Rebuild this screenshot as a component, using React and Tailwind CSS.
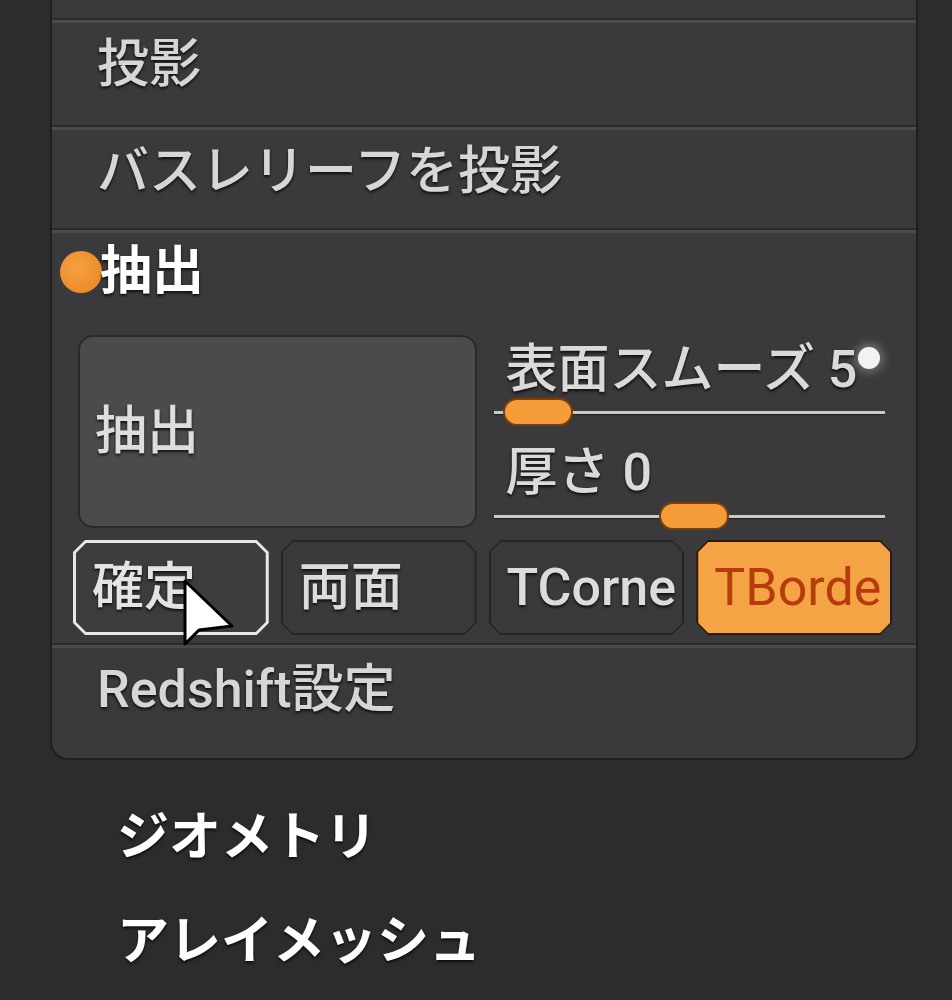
import React from "react";

const FONT = "font-['Roboto','Noto_Sans_CJK_JP',sans-serif]";
const SHADOW = "[text-shadow:0_2px_3px_rgba(0,0,0,0.75)]";

function Sep() {
  return <div className="h-[5px] border-t-2 border-[#2b2b2d] bg-[#4b4b4d]" />;
}

const CLIP_OUT =
  "[clip-path:polygon(12px_0,calc(100%_-_12px)_0,100%_12px,100%_calc(100%_-_12px),calc(100%_-_12px)_100%,12px_100%,0_calc(100%_-_12px),0_12px)]";
const CLIP_IN =
  "[clip-path:polygon(10px_0,calc(100%_-_10px)_0,100%_10px,100%_calc(100%_-_10px),calc(100%_-_10px)_100%,10px_100%,0_calc(100%_-_10px),0_10px)]";

function Btn({ children, variant }) {
  let outer = "bg-[#252527] p-[2px]";
  let inner = "bg-[#3a3a3c] text-[#dcdcdc]";
  if (variant === "sel") {
    outer = "bg-[#e8e8e8] p-[3px]";
    inner = "bg-[#3d3d3f] text-[#e4e4e4]";
  } else if (variant === "on") {
    outer = "bg-[#2a1a0c] p-[2px]";
    inner = "bg-[#f4a444] text-[#b63c0e]";
  }
  return (
    <div className={`h-[95px] ${outer} ${CLIP_OUT}`}>
      <div
        className={`h-full w-full flex items-center pl-[16px] overflow-hidden whitespace-nowrap ${inner} ${CLIP_IN}`}
      >
        <span className={`text-[52px] leading-none ${variant === "on" ? "font-normal" : `font-medium ${SHADOW}`}`}>{children}</span>
      </div>
    </div>
  );
}

function Slider({ offset }) {
  return (
    <div className="relative h-[28px] flex items-center">
      <div className="w-full h-[3px] bg-[#cacaca] shadow-[0_1px_1px_rgba(0,0,0,0.5)]" />
      <div
        className="absolute top-0 h-[28px] w-[70px] rounded-full bg-[#f39c38] border-2 border-[#7a3f0e]"
        style={{ left: offset }}
      />
    </div>
  );
}

export default function App() {
  return (
    <div className={`relative h-[1000px] w-[952px] overflow-hidden bg-[#2c2c2e] ${FONT}`}>
      <div className="ml-[50px] w-[868px] bg-[#3a3a3c] border-x-2 border-b-2 border-[#1f1f21] rounded-b-[18px]">
        <div className="h-[18px]" />
        <Sep />
        <div className="h-[102px] flex items-center pl-[45px] pb-[18px]">
          <span className={`text-[52px] leading-none font-medium text-[#d6d6d6] ${SHADOW}`}>投影</span>
        </div>
        <Sep />
        <div className="h-[98px] flex items-center pl-[45px] pb-[14px]">
          <span className={`text-[52px] leading-none font-medium text-[#d6d6d6] ${SHADOW}`}>バスレリーフを投影</span>
        </div>
        <Sep />
        <div className="h-[78px] flex items-center">
          <div className="ml-[8px] h-[42px] w-[42px] shrink-0 rounded-full bg-[radial-gradient(circle_at_40%_40%,#f7a040,#e5851f)]" />
          <span className={`-ml-[2px] text-[52px] leading-none font-bold text-white ${SHADOW}`}>抽出</span>
        </div>
        <div className="mt-[24px] pl-[21px] pr-[24px]">
          <div className="grid grid-cols-2 gap-3">
            <div className="ml-[5px] h-[193px] rounded-[15px] border-2 border-[#2a2a2c] bg-[#4b4b4c] flex items-center pl-[15px]">
              <span className={`text-[52px] leading-none font-medium text-[#dedede] ${SHADOW}`}>抽出</span>
            </div>
            <div className="pl-[5px] pr-[7px] flex flex-col">
              <div className="relative mt-[10px] h-[50px] flex items-center pl-[12px]">
                <span className={`text-[52px] leading-none font-medium text-[#dadada] whitespace-nowrap ${SHADOW}`}>表面スムーズ 5</span>
                <div className="absolute left-[364px] top-[2px] h-[22px] w-[22px] rounded-full bg-[#f2f2f2] shadow-[0_0_8px_4px_rgba(200,200,200,0.35)]" />
              </div>
              <div className="mt-[3px]">
                <Slider offset={9} />
              </div>
              <div className="mt-[22px] h-[50px] flex items-center pl-[12px]">
                <span className={`text-[52px] leading-none font-medium text-[#dadada] whitespace-nowrap ${SHADOW}`}>厚さ 0</span>
              </div>
              <div className="mt-[4px]">
                <Slider offset={165} />
              </div>
            </div>
          </div>
          <div className="relative mt-[10px] grid grid-cols-4 gap-3">
            <Btn variant="sel">確定</Btn>
            <Btn>両面</Btn>
            <Btn>TCorne</Btn>
            <Btn variant="on">TBorde</Btn>
            <svg
              className="absolute left-[109px] top-[38px]"
              width="54"
              height="72"
              viewBox="0 0 54 72"
            >
              <path
                d="M3 3 L3 66 L17 52 L50 48 Z"
                fill="#ffffff"
                stroke="#000000"
                strokeWidth="3"
                strokeLinejoin="round"
              />
            </svg>
          </div>
          <div className="h-[8px]" />
        </div>
        <Sep />
        <div className="h-[110px] flex items-center pl-[45px] pb-[26px]">
          <span className={`text-[52px] leading-none font-medium text-[#d6d6d6] ${SHADOW}`}>Redshift設定</span>
        </div>
      </div>
      <div className="mt-[26px] pl-[117px]">
        <div className="h-[104px] flex items-center">
          <span className={`text-[52px] leading-none font-bold text-white ${SHADOW}`}>ジオメトリ</span>
        </div>
        <div className="h-[104px] flex items-center">
          <span className={`text-[52px] leading-none font-bold text-white ${SHADOW}`}>アレイメッシュ</span>
        </div>
      </div>
    </div>
  );
}
